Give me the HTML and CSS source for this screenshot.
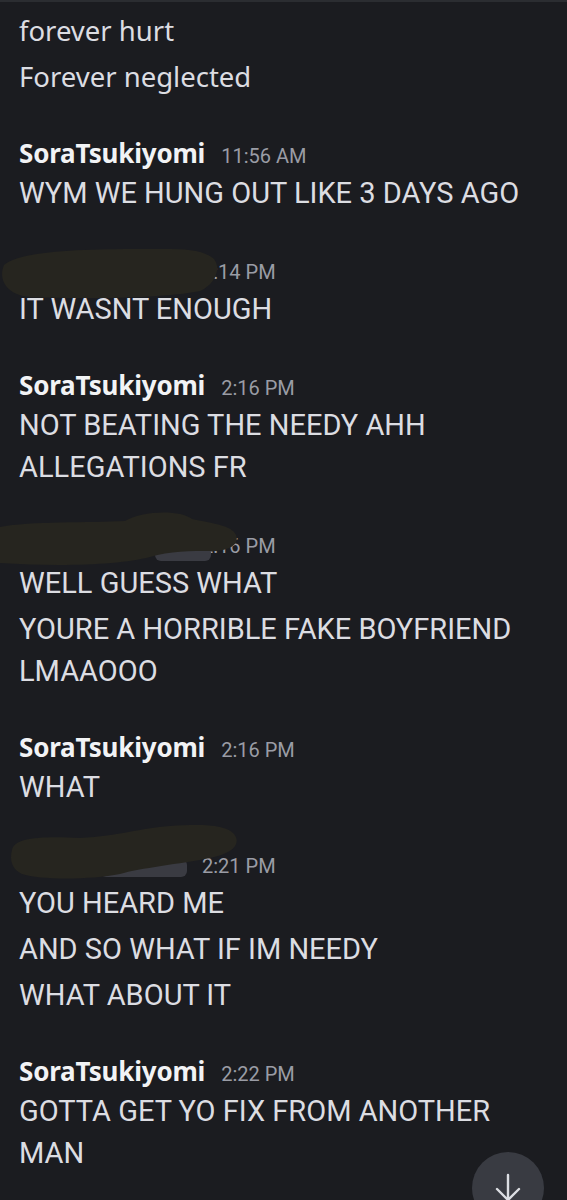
FILE: index.html
```html
<!DOCTYPE html>
<html>
<head>
<meta charset="utf-8">
<link rel="stylesheet" href="styles.css">
</head>
<body>
<div class="chat">
  <div class="group first">
    <p class="line lower">forever hurt</p>
    <p class="line lower">Forever neglected</p>
  </div>

  <div class="group">
    <div class="header"><span class="name">SoraTsukiyomi</span><span class="time">11:56 AM</span></div>
    <p class="line">WYM WE HUNG OUT LIKE 3 DAYS AGO</p>
  </div>

  <div class="group">
    <div class="header">
      <span class="hidden-name"></span><span class="time">2:14 PM</span>
      <svg class="scribble s1" viewBox="0 0 220 54" width="220" height="54"><path d="M4 20 C20 6 80 4 140 4 C175 4 200 2 214 14 C222 24 214 40 200 46 C160 54 80 54 30 52 C6 50 -2 34 4 20 Z" fill="#26251f"/></svg>
    </div>
    <p class="line">IT WASNT ENOUGH</p>
  </div>

  <div class="group">
    <div class="header"><span class="name">SoraTsukiyomi</span><span class="time">2:16 PM</span></div>
    <p class="line">NOT BEATING THE NEEDY AHH ALLEGATIONS FR</p>
  </div>

  <div class="group">
    <div class="header">
      <span class="pill p2"></span><span class="hidden-name"></span><span class="time">2:16 PM</span>
      <svg class="scribble s2" viewBox="0 0 240 60" width="240" height="60"><path d="M0 16 C30 10 90 12 125 10 C140 0 180 -2 192 8 C210 12 232 14 236 24 C240 34 228 40 212 40 C190 40 170 40 150 46 C120 54 60 56 0 52 Z" fill="#26251f"/></svg>
    </div>
    <p class="line">WELL GUESS WHAT</p>
    <p class="line">YOURE A HORRIBLE FAKE BOYFRIEND LMAAOOO</p>
  </div>

  <div class="group">
    <div class="header"><span class="name">SoraTsukiyomi</span><span class="time">2:16 PM</span></div>
    <p class="line">WHAT</p>
  </div>

  <div class="group">
    <div class="header">
      <span class="pill p3"></span><span class="hidden-name"></span><span class="time">2:21 PM</span>
      <svg class="scribble s3" viewBox="0 0 230 56" width="230" height="56"><path d="M2 26 C4 14 30 12 70 14 C110 12 130 4 160 2 C190 0 216 0 224 10 C232 20 222 30 200 34 C170 40 130 44 110 50 C80 56 30 56 12 50 C0 44 0 34 2 26 Z" fill="#26251f"/></svg>
    </div>
    <p class="line">YOU HEARD ME</p>
    <p class="line">AND SO WHAT IF IM NEEDY</p>
    <p class="line">WHAT ABOUT IT</p>
  </div>

  <div class="group">
    <div class="header"><span class="name">SoraTsukiyomi</span><span class="time">2:22 PM</span></div>
    <p class="line">GOTTA GET YO FIX FROM ANOTHER MAN</p>
  </div>
</div>

<button class="jump" aria-label="Jump to present">
  <svg viewBox="0 0 72 72" width="72" height="72"><path d="M36 23 V48 M25 37 L36 48 L47 37" fill="none" stroke="#dcdee3" stroke-width="2.4" stroke-linecap="round" stroke-linejoin="round"/></svg>
</button>
</body>
</html>
```

FILE: styles.css
```css
html, body {
  margin: 0;
  padding: 0;
  background: #1b1c20;
  height: 1200px;
  overflow: hidden;
}
body {
  border-top: 2px solid #2b2d31;
  box-sizing: border-box;
  position: relative;
}
.chat {
  padding: 8px 20px 0 19px;
  display: flex;
  flex-direction: column;
  gap: 39px;
}
.group {
  display: flex;
  flex-direction: column;
  gap: 4px;
}
.header {
  position: relative;
  display: block;
  white-space: nowrap;
  height: 32px;
  line-height: 32px;
  margin-bottom: -1px;
  font-family: "Noto Sans", sans-serif;
  font-weight: 700;
  font-size: 26px;
}
.name {
  color: #f2f3f5;
  letter-spacing: -0.2px;
}
.hidden-name {
  display: inline-block;
  width: 183px;
  height: 0;
}
.time {
  font-family: Roboto, sans-serif;
  font-weight: 400;
  font-size: 20px;
  color: #9a9ca5;
  margin-left: 16px;
}
.hidden-name + .time { margin-left: 0; }
.line {
  margin: 0;
  font-family: Roboto, sans-serif;
  font-size: 29px;
  line-height: 42px;
  color: #dcdde2;
}
.line.lower {
  font-family: "Noto Sans", sans-serif;
  font-size: 27.5px;
}
.pill {
  position: absolute;
  display: block;
  background: #3a3b42;
  border-radius: 6px;
}
.p2 { left: 136px; top: 20px; width: 56px; height: 14px; }
.p3 { left: 81px; top: 12px; width: 87px; height: 18px; }
.scribble {
  position: absolute;
}
.s1 { left: -19px; top: -8px; }
.s2 { left: -19px; top: -16px; }
.s3 { left: -9px; top: -23px; }
.jump {
  position: absolute;
  left: 472px;
  top: 1150px;
  width: 72px;
  height: 72px;
  border: none;
  border-radius: 50%;
  background: #393b42;
  padding: 0;
  display: flex;
  align-items: center;
  justify-content: center;
}
```
